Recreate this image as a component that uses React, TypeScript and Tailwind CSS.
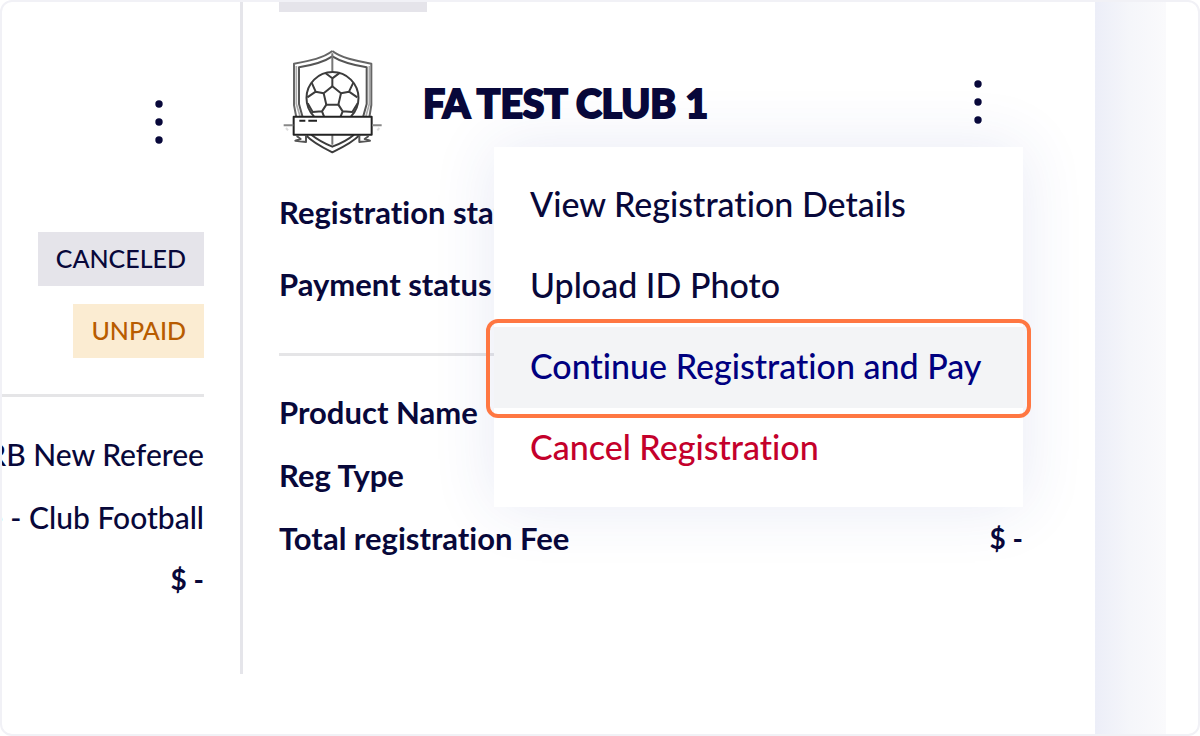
import React, { useState } from "react";

interface MenuItem {
  id: string;
  label: string;
  color: string;
}

interface Fee {
  label: string;
  value?: string;
}

const menuItems: MenuItem[] = [
  { id: "details", label: "View Registration Details", color: "text-[#08083a]" },
  { id: "photo", label: "Upload ID Photo", color: "text-[#08083a]" },
  { id: "continue", label: "Continue Registration and Pay", color: "text-[#000080]" },
  { id: "cancel", label: "Cancel Registration", color: "text-[#c4002b]" },
];

const fees: Fee[] = [
  { label: "Product Name" },
  { label: "Reg Type" },
  { label: "Total registration Fee", value: "$ -" },
];

const previousValues = ["RB New Referee", "Referee - Club Football"];

const DotsButton = ({ label, onClick }: { label: string; onClick?: () => void }) => (
  <button
    type="button"
    aria-label={label}
    onClick={onClick}
    className="flex h-16 w-[90px] shrink-0 cursor-pointer items-center justify-center"
  >
    <svg width="8" height="44" viewBox="0 0 8 44" fill="#08083a">
      <circle cx="4" cy="4" r="3.7" />
      <circle cx="4" cy="22" r="3.7" />
      <circle cx="4" cy="40" r="3.7" />
    </svg>
  </button>
);

const ClubCrest = () => (
  <svg
    className="size-[105px] shrink-0"
    viewBox="27 27 315 315"
    fill="none"
    stroke="#3c3c3c"
    strokeWidth="6"
    strokeLinejoin="round"
    aria-hidden="true"
  >
    {/* shield */}
    <path d="M187 33C160 54 122 62 72 71V195L79 232M187 33C214 54 254 62 304 71V195L298 232" stroke="#666" />
    <path d="M79 78V192L91 232M298 78V192L287 232" stroke="#aaa" strokeWidth="5" />
    <path d="M187 49C162 66 128 75 87 82V192L98 232M187 49C214 66 250 75 290 82V192L279 232" stroke="#555" />
    <path d="M187 40V94M187 284V314" stroke="#777" />
    <path d="M106 284C128 308 158 323 187 337C216 323 248 308 270 284M124 284C145 301 166 311 187 320C210 311 232 301 252 284" />
    {/* ball */}
    <path d="M132 229A78 78 0 1 1 243 229" />
    <path d="M187 139L213 160L205 194H169L161 160Z" />
    <path d="M187 139V115L165 98M187 115L210 98" />
    <path d="M161 160L137 155L125 128M137 155L112 172M213 160L237 155L250 128M237 155L262 172" />
    <path d="M169 194L156 214L128 216L113 190M156 214L162 229M205 194L218 214L247 216L263 190M218 214L212 229" />
    {/* ribbon */}
    <rect x="71" y="230" width="234" height="54" fill="#fff" stroke="#222" />
    <path d="M88 242H106M115 242H141" stroke="#222" />
    <path d="M41 256H70M306 256H335" stroke="#888" />
    <path d="M48 264L54 271M328 264L322 271" stroke="#ddd" />
    <path d="M80 288L92 297L76 302L108 306V286M296 288L284 297L300 302L268 306V286" stroke="#555" />
  </svg>
);

const PreviousRegistration = () => (
  <section className="flex w-[241px] shrink-0 flex-col items-end border-r-[3px] border-[#e5e5ea] pt-[88px] pr-9">
    <DotsButton label="Options for previous registration" />
    <div className="mt-[78px] flex flex-col items-end gap-[18px] text-[25px] leading-[52px] font-medium">
      <span className="bg-[#e5e4ea] px-[18px] pb-[2px]">CANCELED</span>
      <span className="bg-[#fbecd2] px-[18px] pb-[2px] text-[#b85c00]">UNPAID</span>
    </div>
    <hr className="mt-9 w-full border-t-[3px] border-[#e5e5e7]" />
    <div className="mt-[26px] flex w-full flex-col items-end overflow-hidden text-[30px] leading-[63px] font-medium whitespace-nowrap">
      {previousValues.map((value) => (
        <span key={value}>{value}</span>
      ))}
      <span className="text-[28px] leading-[60px] font-bold">$ -</span>
    </div>
  </section>
);

const ActionMenu = () => (
  <ul
    role="menu"
    className="absolute top-[98px] right-0 w-[529px] bg-white py-[18px] shadow-[0_0_60px_rgba(50,60,160,0.11)]"
  >
    {menuItems.map((item) => (
      <li
        key={item.id}
        role="none"
        className={item.id === "continue" ? "relative bg-[#f3f4f6]" : undefined}
      >
        <button
          type="button"
          role="menuitem"
          className={`h-[81px] w-full cursor-pointer px-9 pb-1 text-left text-[34px] font-medium whitespace-nowrap ${item.color}`}
        >
          {item.label}
        </button>
        {item.id === "continue" && (
          <span className="pointer-events-none absolute -inset-x-2 -top-2 -bottom-[10px] rounded-xl border-4 border-[#ff7742]" />
        )}
      </li>
    ))}
  </ul>
);

const ClubRegistration = () => {
  const [menuOpen, setMenuOpen] = useState<boolean>(true);

  return (
    <section className="min-w-0 flex-1 pr-[72px] pl-9">
      <div className="h-[10px] w-[148px] bg-[#e5e4ea]" />

      <header className="relative z-10 mt-[37px] flex items-center">
        <ClubCrest />
        <h2 className="ml-[39px] flex-1 pt-1 text-[39px] font-black whitespace-nowrap [-webkit-text-stroke:2px_#08083a]">
          FA TEST CLUB 1
        </h2>
        <DotsButton label="Options for FA TEST CLUB 1" onClick={() => setMenuOpen(!menuOpen)} />
        {menuOpen && <ActionMenu />}
      </header>

      <div className="mt-[22px] text-[31px] leading-[72px] font-bold">
        <p>Registration status</p>
        <p>Payment status</p>
      </div>
      <hr className="mt-[33px] border-t-[3px] border-[#e5e5e7]" />
      <dl className="mt-[25px] text-[31px] leading-[63px] font-bold">
        {fees.map((fee) => (
          <div key={fee.label} className="flex justify-between">
            <dt>{fee.label}</dt>
            <dd className="text-[28px]">{fee.value}</dd>
          </div>
        ))}
      </dl>
    </section>
  );
};

export default function App() {
  return (
    <main className="flex min-h-screen overflow-hidden rounded-xl border-2 border-[#f1f1f6] bg-white font-['Lato','Open_Sans',sans-serif] text-[#08083a] [font-variant-ligatures:none]">
      <div className="mb-[60px] flex shrink-0">
        <PreviousRegistration />
      </div>
      <ClubRegistration />
      <div className="mr-8 w-[71px] shrink-0 bg-linear-to-r from-[#eceef8] via-[#f5f6fa] to-[#fafafc]" />
    </main>
  );
}
